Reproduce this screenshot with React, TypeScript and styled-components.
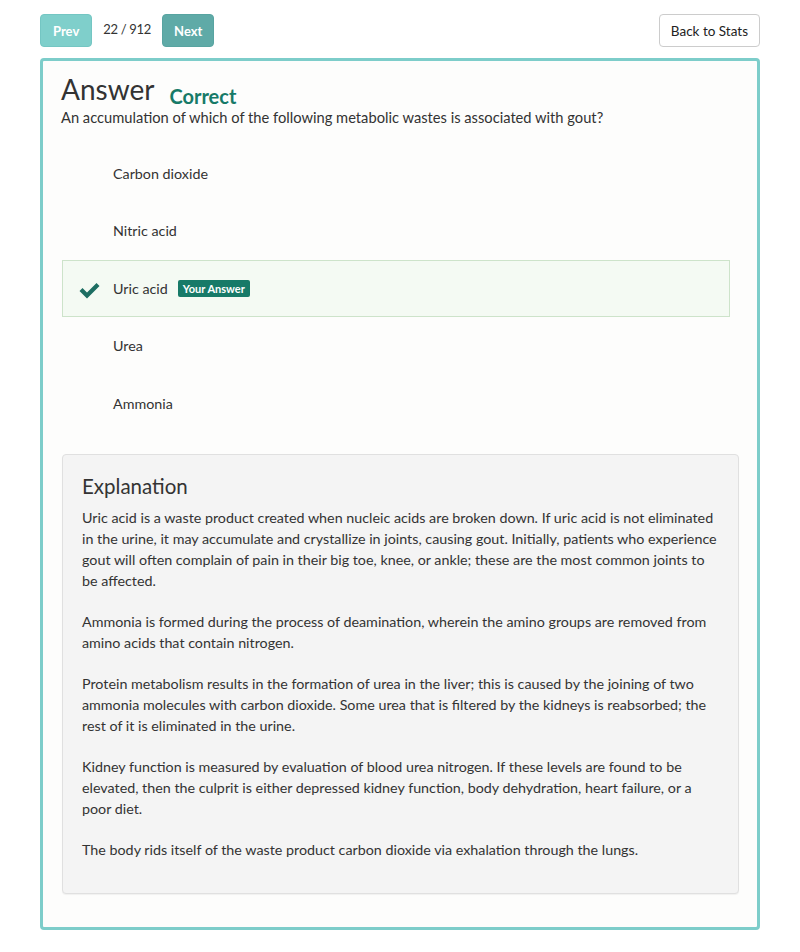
import styled, { createGlobalStyle } from "styled-components";

const GlobalStyle = createGlobalStyle`
  body {
    margin: 0;
    background: #ffffff;
    font-family: Lato, "Open Sans", sans-serif;
    color: #333333;
  }
`;

const Page = styled.div`
  width: 720px;
  margin: 14px auto 0;
`;

const Toolbar = styled.div`
  display: flex;
  align-items: center;
  height: 33px;
  margin-bottom: 11px;
`;

const NavButton = styled.button<{ $dark?: boolean }>`
  height: 33px;
  padding: 0 ${(p) => (p.$dark ? "11px" : "12px")};
  border: 1px solid ${(p) => (p.$dark ? "#58a4a1" : "#74c6c3")};
  border-radius: 4px;
  background: ${(p) => (p.$dark ? "#5faaa7" : "#7fcfcb")};
  color: #ffffff;
  font-family: Lato, sans-serif;
  font-weight: 700;
  font-size: 13px;
  cursor: pointer;
`;

const Counter = styled.span`
  font-size: 13px;
  letter-spacing: -0.3px;
  margin: 0 11px;
  position: relative;
  top: -2px;
`;

const BackButton = styled.button`
  margin-left: auto;
  height: 33px;
  padding: 0 11px;
  border: 1px solid #cccccc;
  border-radius: 4px;
  background: #ffffff;
  color: #222222;
  font-family: Lato, sans-serif;
  font-size: 13.5px;
  cursor: pointer;
`;

const Card = styled.div`
  border: 3px solid #7dcdca;
  border-radius: 4px;
  background: #fdfdfc;
  padding: 10px 18px 33px 18px;
`;

const TitleRow = styled.div`
  display: flex;
  align-items: baseline;
  gap: 15px;
`;

const Title = styled.h1`
  margin: 0;
  font-size: 28px;
  font-weight: 400;
  line-height: 36px;
  color: #333333;
`;

const Verdict = styled.span`
  font-size: 20px;
  font-weight: 700;
  color: #177a68;
  position: relative;
  top: 4px;
`;

const Question = styled.p`
  margin: 0;
  font-size: 14.7px;
  line-height: 21px;
`;

const Options = styled.ul`
  list-style: none;
  margin: 16.5px 9px 21.5px 1px;
  padding: 0;
`;

const Option = styled.li<{ $selected?: boolean }>`
  position: relative;
  display: flex;
  align-items: center;
  height: 57.5px;
  box-sizing: border-box;
  padding-left: 50px;
  font-size: 14.3px;
  border: 1px solid ${(p) => (p.$selected ? "#cde3ca" : "transparent")};
  background: ${(p) => (p.$selected ? "#f4faf3" : "transparent")};
`;

const Check = styled.svg`
  position: absolute;
  left: 15px;
  top: 21px;
  width: 23px;
  height: 17px;
`;

const Badge = styled.span`
  margin-left: 10px;
  padding: 2px 5px;
  border-radius: 2px;
  background: #177a68;
  color: #ffffff;
  font-size: 11px;
  font-weight: 700;
  line-height: 13px;
`;

const Explanation = styled.div`
  margin-left: 1px;
  border: 1px solid #e0e0e0;
  border-radius: 4px;
  background: #f4f4f4;
  box-shadow: 0 1px 1px rgba(0, 0, 0, 0.05);
  padding: 20px 20px 13px 19px;
`;

const ExplanationTitle = styled.h2`
  margin: 0 0 10px;
  font-size: 20.5px;
  font-weight: 400;
  line-height: 22px;
`;

const Paragraph = styled.p`
  margin: 0 0 20px;
  font-size: 14.3px;
  line-height: 21px;
`;

const options = ["Carbon dioxide", "Nitric acid", "Uric acid", "Urea", "Ammonia"];
const chosen = "Uric acid";

const explanation = [
  "Uric acid is a waste product created when nucleic acids are broken down. If uric acid is not eliminated in the urine, it may accumulate and crystallize in joints, causing gout. Initially, patients who experience gout will often complain of pain in their big toe, knee, or ankle; these are the most common joints to be affected.",
  "Ammonia is formed during the process of deamination, wherein the amino groups are removed from amino acids that contain nitrogen.",
  "Protein metabolism results in the formation of urea in the liver; this is caused by the joining of two ammonia molecules with carbon dioxide. Some urea that is filtered by the kidneys is reabsorbed; the rest of it is eliminated in the urine.",
  "Kidney function is measured by evaluation of blood urea nitrogen. If these levels are found to be elevated, then the culprit is either depressed kidney function, body dehydration, heart failure, or a poor diet.",
  "The body rids itself of the waste product carbon dioxide via exhalation through the lungs.",
];

export default function App() {
  return (
    <>
      <GlobalStyle />
      <Page>
        <Toolbar>
          <NavButton>Prev</NavButton>
          <Counter>22 / 912</Counter>
          <NavButton $dark>Next</NavButton>
          <BackButton>Back to Stats</BackButton>
        </Toolbar>
        <Card>
          <TitleRow>
            <Title>Answer</Title>
            <Verdict>Correct</Verdict>
          </TitleRow>
          <Question>An accumulation of which of the following metabolic wastes is associated with gout?</Question>
          <Options>
            {options.map((o) => (
              <Option key={o} $selected={o === chosen}>
                {o === chosen && (
                  <Check viewBox="0 0 23 17">
                    <path d="M1.5 9 L4.5 6 L9 10.5 L18.5 1 L21.5 4 L9 16.5 Z" fill="#1d6e62" />
                  </Check>
                )}
                {o}
                {o === chosen && <Badge>Your Answer</Badge>}
              </Option>
            ))}
          </Options>
          <Explanation>
            <ExplanationTitle>Explanation</ExplanationTitle>
            {explanation.map((t, i) => (
              <Paragraph key={i}>{t}</Paragraph>
            ))}
          </Explanation>
        </Card>
      </Page>
    </>
  );
}
